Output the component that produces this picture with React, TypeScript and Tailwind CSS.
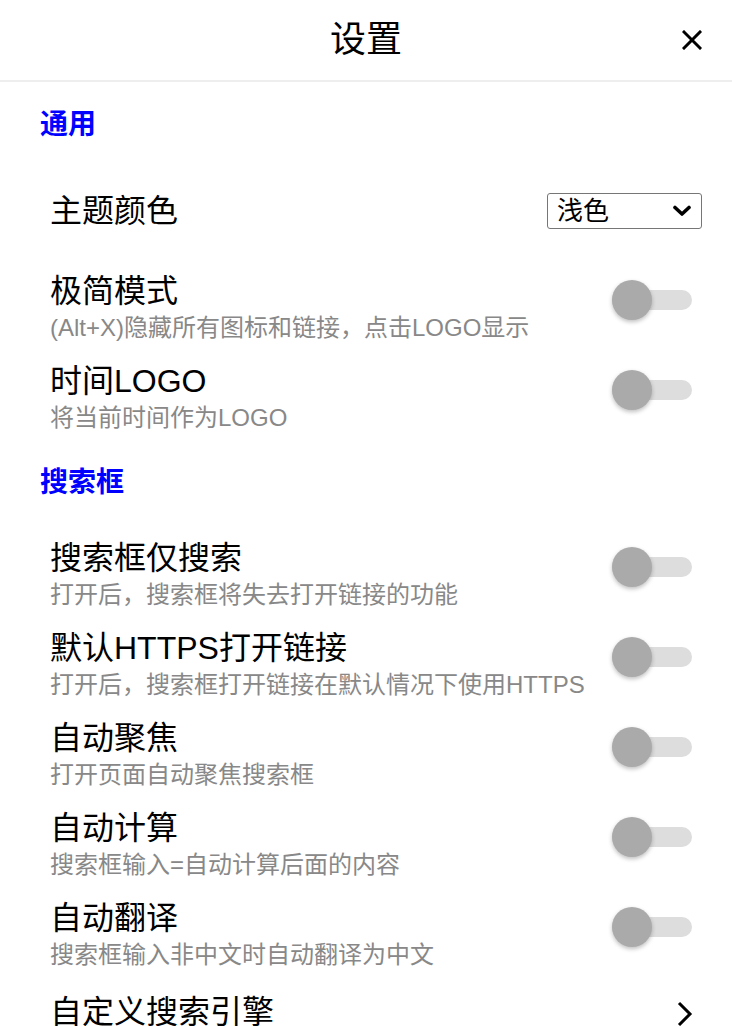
import React from "react";

const FONT = { fontFamily: '"Liberation Sans", "Noto Sans CJK SC", sans-serif' };

function Toggle() {
  return (
    <div className="relative w-[80px] h-[40px] mt-[9px] shrink-0">
      <div className="absolute left-0 right-0 top-[10px] h-[20px] rounded-full bg-[#dddddd]" />
      <div className="absolute left-0 top-0 w-[40px] h-[40px] rounded-full bg-[#aaaaaa] shadow-[0_2px_4px_rgba(0,0,0,0.25)]" />
    </div>
  );
}

function ToggleItem({ title, sub }: { title: string; sub: string }) {
  return (
    <div className="flex items-start justify-between pl-[50px] pr-[40px] py-[8px] h-[90px]">
      <div className="flex flex-col">
        <div className="text-[32px] leading-[40px] text-black">{title}</div>
        <div className="text-[24px] leading-[34px] text-[#888888]">{sub}</div>
      </div>
      <Toggle />
    </div>
  );
}

function SectionHeader({ text, cls }: { text: string; cls: string }) {
  return (
    <div className={"pl-[40px] " + cls}>
      <div className="text-[28px] leading-[40px] font-bold text-[#0000ff]">{text}</div>
    </div>
  );
}

export default function App() {
  return (
    <div className="w-[732px] h-[1026px] bg-white overflow-hidden" style={FONT}>
      <div className="relative h-[82px] border-b-2 border-[#eeeeee] flex items-center justify-center">
        <div className="text-[36px] leading-[44px] text-black">设置</div>
        <div className="absolute right-[30px] top-[30px] w-[20px] h-[20px]">
          <svg width="20" height="20" viewBox="0 0 20 20">
            <path d="M2 2 L18 18 M18 2 L2 18" stroke="#000" strokeWidth="3" strokeLinecap="square" />
          </svg>
        </div>
      </div>

      <SectionHeader text="通用" cls="pt-[23px] h-[85px]" />

      <div className="h-[96px] pt-[24px] pl-[50px] pr-[30px]">
        <div className="flex items-center justify-between h-[40px]">
          <div className="text-[32px] leading-[40px] text-black">主题颜色</div>
          <div className="w-[155px] h-[36px] border border-[#767676] rounded-[3px] flex items-center justify-between pl-[9px] pr-[9px]">
            <span className="text-[26px] leading-[34px] text-black">浅色</span>
            <svg width="20" height="12" viewBox="0 0 20 12">
              <path d="M3 2.5 L10 9 L17 2.5" stroke="#000" strokeWidth="3.6" fill="none" strokeLinecap="round" strokeLinejoin="round" />
            </svg>
          </div>
        </div>
      </div>

      <ToggleItem title="极简模式" sub="(Alt+X)隐藏所有图标和链接，点击LOGO显示" />
      <ToggleItem title="时间LOGO" sub="将当前时间作为LOGO" />

      <SectionHeader text="搜索框" cls="pt-[20px] h-[87px]" />

      <ToggleItem title="搜索框仅搜索" sub="打开后，搜索框将失去打开链接的功能" />
      <ToggleItem title="默认HTTPS打开链接" sub="打开后，搜索框打开链接在默认情况下使用HTTPS" />
      <ToggleItem title="自动聚焦" sub="打开页面自动聚焦搜索框" />
      <ToggleItem title="自动计算" sub="搜索框输入=自动计算后面的内容" />
      <ToggleItem title="自动翻译" sub="搜索框输入非中文时自动翻译为中文" />

      <div className="flex items-start justify-between pl-[50px] pr-[38px] pt-[12px] h-[60px]">
        <div className="text-[32px] leading-[40px] text-black">自定义搜索引擎</div>
        <svg width="18" height="28" viewBox="0 0 18 28" className="mt-[8px]">
          <path d="M3 3 L14 14 L3 25" stroke="#000" strokeWidth="3" fill="none" />
        </svg>
      </div>
    </div>
  );
}
